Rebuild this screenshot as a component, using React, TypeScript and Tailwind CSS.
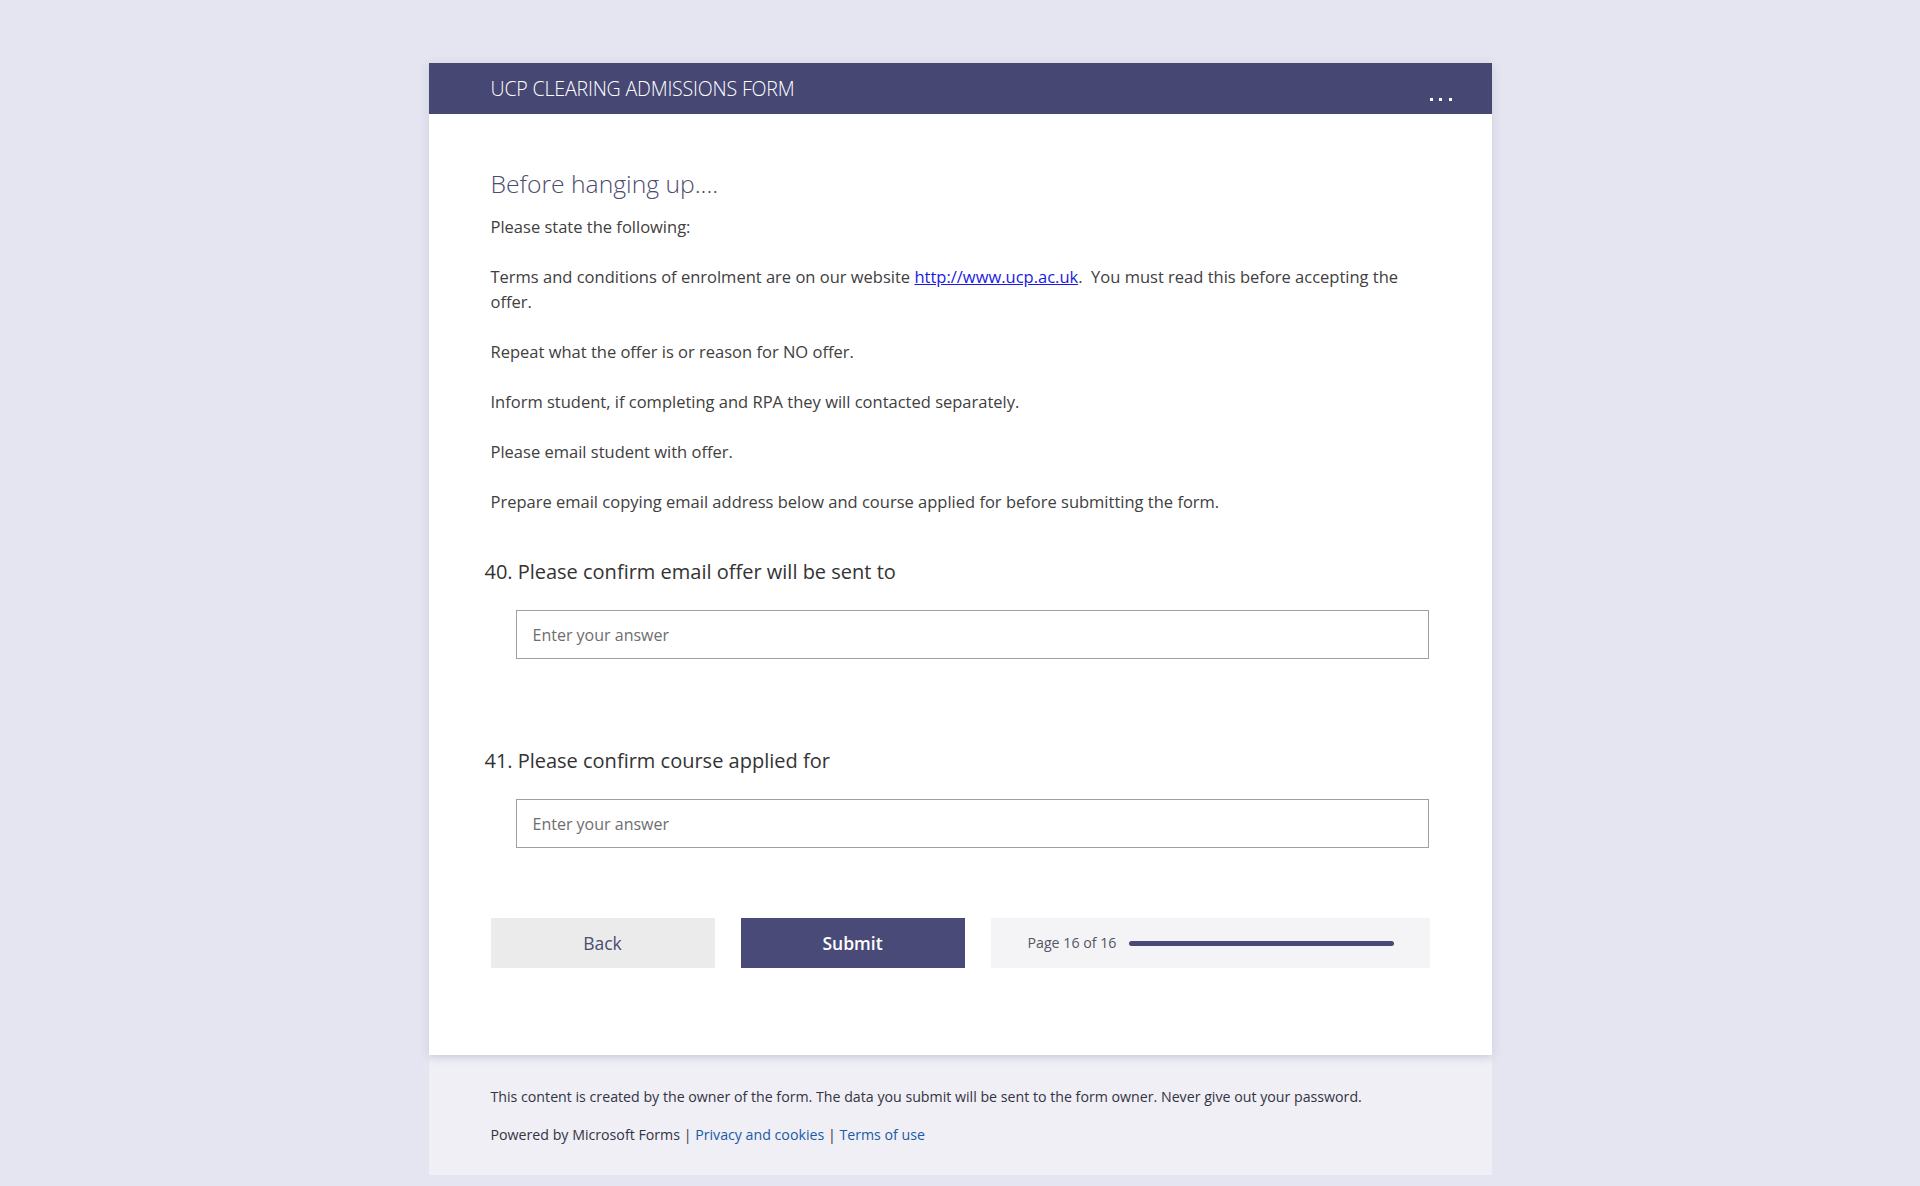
export default function App() {
  return (
    <main className="min-h-screen bg-[#e5e5f1] pt-[63px] pb-[12px] font-['Open_Sans',_'Noto_Sans',_Arial,_sans-serif]">
      <div className="mx-auto w-[1063px]">
        {/* Card */}
        <div className="relative z-10 bg-white shadow-[0_2px_10px_rgba(60,60,110,0.14)]">
          {/* Header */}
          <div className="flex h-[51px] items-center justify-between bg-[#474774] pl-[62px] pr-[40px]">
            <h1 className="text-[19.6px] font-light tracking-[-0.2px] text-white">
              UCP CLEARING ADMISSIONS FORM
            </h1>
            <div className="mt-[22px] flex gap-[6.5px]">
              <span className="h-[3px] w-[3px] bg-white" />
              <span className="h-[3px] w-[3px] bg-white" />
              <span className="h-[3px] w-[3px] bg-white" />
            </div>
          </div>

          {/* Body */}
          <div className="px-[62px] pt-[53px] pb-[87px]">
            <h2 className="text-[24.7px] leading-[34px] font-light text-[#4c4c6e]">
              Before hanging up....
            </h2>
            <div className="mt-[13px] text-[16.5px] leading-[25px] text-[#404040]">
              <p>Please state the following:</p>
              <p>&nbsp;</p>
              <p>
                Terms and conditions of enrolment are on our website{" "}
                <a href="#" className="text-[#1a1ae6] underline">
                  http://www.ucp.ac.uk
                </a>
                .&nbsp; You must read this before accepting the offer.
              </p>
              <p>&nbsp;</p>
              <p>Repeat what the offer is or reason for NO offer.</p>
              <p>&nbsp;</p>
              <p>Inform student, if completing and RPA they will contacted separately.</p>
              <p>&nbsp;</p>
              <p>Please email student with offer.</p>
              <p>&nbsp;</p>
              <p>
                Prepare email copying email address below and course applied for before
                submitting the form.
              </p>
            </div>

            {/* Question 40 */}
            <div className="mt-[44px]">
              <div className="-ml-[6px] flex text-[20px] leading-[28px] text-[#333333]">
                <span className="mr-[5px]">40.</span>
                <span>Please confirm email offer will be sent to</span>
              </div>
              <input
                type="text"
                placeholder="Enter your answer"
                className="mt-[24px] ml-[25px] block h-[49px] w-[913px] border border-[#a0a0a0] bg-white px-[16px] text-[16px] text-[#333] placeholder:text-[#6e6e6e] outline-none"
              />
            </div>

            {/* Question 41 */}
            <div className="mt-[88px]">
              <div className="-ml-[6px] flex text-[20px] leading-[28px] text-[#333333]">
                <span className="mr-[5px]">41.</span>
                <span>Please confirm course applied for</span>
              </div>
              <input
                type="text"
                placeholder="Enter your answer"
                className="mt-[24px] ml-[25px] block h-[49px] w-[913px] border border-[#a0a0a0] bg-white px-[16px] text-[16px] text-[#333] placeholder:text-[#6e6e6e] outline-none"
              />
            </div>

            {/* Buttons */}
            <div className="mt-[70px] flex gap-[26px]">
              <button className="h-[50px] w-[224px] bg-[#ebebeb] text-[17.5px] text-[#4c4c6e]">
                Back
              </button>
              <button className="h-[50px] w-[224px] bg-[#4a4a78] text-[17.5px] font-semibold text-white">
                Submit
              </button>
              <div className="flex h-[50px] flex-1 items-center gap-[13px] bg-[#f4f4f7] pl-[37px] pr-[36px]">
                <span className="text-[14.2px] text-[#555566]">Page 16 of 16</span>
                <div className="h-[5px] flex-1 rounded-full bg-[#4a4a78]" />
              </div>
            </div>
          </div>
        </div>

        {/* Footer */}
        <div className="bg-[#efeff5] pl-[62px] pr-[40px] pt-[32px] pb-[30px] text-[14.2px] leading-[20px] text-[#333344] shadow-[inset_0_6px_6px_-4px_rgba(60,60,110,0.08)]">
          <p>
            This content is created by the owner of the form. The data you submit will be sent
            to the form owner. Never give out your password.
          </p>
          <p className="mt-[18px]">
            Powered by Microsoft Forms |{" "}
            <a href="#" className="text-[#1b5aa6]">
              Privacy and cookies
            </a>{" "}
            |{" "}
            <a href="#" className="text-[#1b5aa6]">
              Terms of use
            </a>
          </p>
        </div>
      </div>
    </main>
  );
}
